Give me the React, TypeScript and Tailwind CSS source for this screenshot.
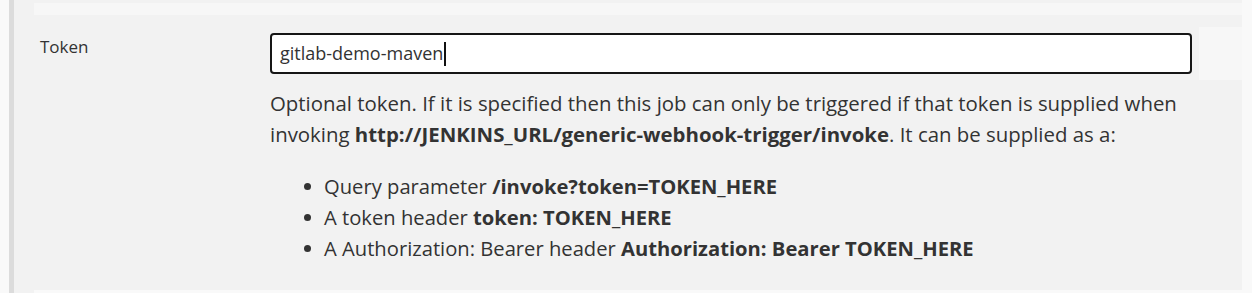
const font = { fontFamily: '"Open Sans", "Noto Sans", sans-serif' };

function Bullet({ children }: { children: React.ReactNode }) {
  return (
    <li className="flex items-center">
      <span className="ml-[34px] mr-[13px] size-[7px] shrink-0 rounded-full bg-[#333333]" />
      <span>{children}</span>
    </li>
  );
}

export default function App() {
  return (
    <div className="flex h-[293px] w-[1252px] overflow-hidden text-[#333333]" style={font}>
      <div className="w-[9px] bg-[#f9f9f9]" />
      <div className="w-[5px] bg-[#dcdcdc]" />
      <div className="flex flex-1 flex-col bg-[#f2f2f2] pl-[20px]">
        <div className="mt-[3px] h-[12px] bg-[#f7f7f7]" />
        <div className="flex pt-[12px]">
          <div className="w-[236px] shrink-0 pl-[6px] pt-[4px] text-[17px] leading-[31px]">Token</div>
          <div className="flex-1 pt-[6px]">
            <div className="flex h-[41px] items-center rounded-[4px] border-2 border-[#161616] bg-white px-[8px] text-[18px]">
              gitlab-demo-maven
              <span className="ml-[1px] h-[24px] w-[2px] bg-[#111111]" />
            </div>
            <div className="mt-[14px] whitespace-nowrap text-[20.4px] leading-[31px]">
              Optional token. If it is specified then this job can only be triggered if that token is supplied when
              <br />
              invoking <b className="font-bold">http://JENKINS_URL/generic-webhook-trigger/invoke</b>. It can be supplied as a:
            </div>
            <ul className="mt-[21px] text-[20.2px] leading-[31px]">
              <Bullet>
                Query parameter <b className="font-bold">/invoke?token=TOKEN_HERE</b>
              </Bullet>
              <Bullet>
                A token header <b className="font-bold">token: TOKEN_HERE</b>
              </Bullet>
              <Bullet>
                A Authorization: Bearer header <b className="font-bold">Authorization: Bearer TOKEN_HERE</b>
              </Bullet>
            </ul>
          </div>
          <div className="ml-[7px] h-[53px] w-[43px] shrink-0 bg-[#f7f7f7]" />
        </div>
        <div className="flex-1" />
        <div className="h-[3px] bg-[#f9f9f9]" />
      </div>
      <div className="w-[10px] bg-[#f9f9f9]" />
    </div>
  );
}
